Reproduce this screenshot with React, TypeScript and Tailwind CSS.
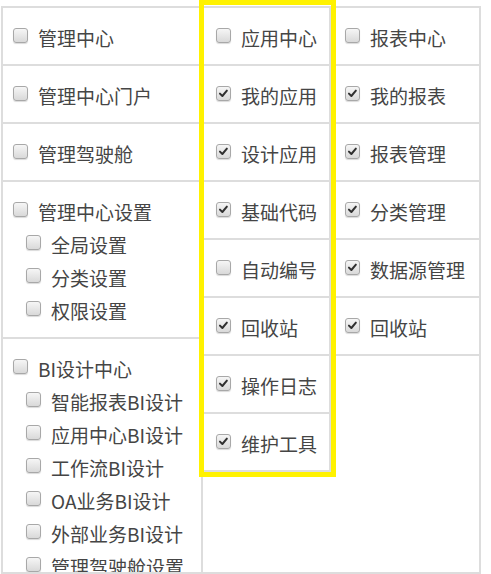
import React from 'react';

type Item = { label: string; checked?: boolean; children?: string[] };

const MANAGE: Item[] = [
  { label: '管理中心' },
  { label: '管理中心门户' },
  { label: '管理驾驶舱' },
  { label: '管理中心设置', children: ['全局设置', '分类设置', '权限设置'] },
  {
    label: 'BI设计中心',
    children: ['智能报表BI设计', '应用中心BI设计', '工作流BI设计', 'OA业务BI设计', '外部业务BI设计', '管理驾驶舱设置'],
  },
];

const APPS: Item[] = [
  { label: '应用中心' },
  { label: '我的应用', checked: true },
  { label: '设计应用', checked: true },
  { label: '基础代码', checked: true },
  { label: '自动编号' },
  { label: '回收站', checked: true },
  { label: '操作日志', checked: true },
  { label: '维护工具', checked: true },
];

const REPORTS: Item[] = [
  { label: '报表中心' },
  { label: '我的报表', checked: true },
  { label: '报表管理', checked: true },
  { label: '分类管理', checked: true },
  { label: '数据源管理', checked: true },
  { label: '回收站', checked: true },
];

const Box: React.FC<{ checked?: boolean }> = ({ checked }) => (
  <span className="relative mr-[10px] -mt-[3px] flex h-[15px] w-[15px] shrink-0 items-center justify-center rounded-[3px] border border-[#a8a8a8] bg-linear-to-b from-[#f6f6f6] to-[#d9d9d9] shadow-[0_1px_1px_rgba(0,0,0,0.15)]">
    {checked && (
      <svg viewBox="0 0 15 15" className="h-[13px] w-[13px]">
        <path d="M3.4 7.6 L6.2 10.4 L11.4 4.2" fill="none" stroke="#303030" strokeWidth="2.3" strokeLinecap="round" strokeLinejoin="round" />
      </svg>
    )}
  </span>
);

const Line: React.FC<{ label: string; checked?: boolean }> = ({ label, checked }) => (
  <div className="flex h-[33px] items-center whitespace-nowrap">
    <Box checked={checked} />
    <span className="translate-y-[2px]">{label}</span>
  </div>
);

const Cell: React.FC<{ item: Item; pad: string; last?: boolean; right?: boolean }> = ({ item, pad, last, right }) => (
  <div
    className={`border-t-2 border-[#dddddd] pt-[12px] pb-[11px] ${pad} ${last ? 'border-b-2' : ''} ${right ? 'border-r-2' : ''}`}
  >
    <Line label={item.label} checked={item.checked} />
    {item.children && (
      <div className="pl-[13px]">
        {item.children.map((c) => (
          <Line key={c} label={c} />
        ))}
      </div>
    )}
  </div>
);

export default function App() {
  return (
    <div
      className="relative h-[574px] w-[491px] overflow-hidden bg-white text-[19px] text-[#454545]"
      style={{ fontFamily: '"Noto Sans CJK SC", "Noto Sans", sans-serif' }}
    >
      <div className="ml-[1px] mt-[6px] flex h-[568px] w-[480px] overflow-hidden border-x-2 border-b-2 border-[#dddddd]">
        <div className="w-[200px] shrink-0 border-r-2 border-[#dddddd]">
          {MANAGE.map((it) => (
            <Cell key={it.label} item={it} pad="pl-[10px]" />
          ))}
        </div>
        <div className="w-[128px] shrink-0">
          {APPS.map((it, i) => (
            <Cell key={it.label} item={it} pad="pl-[13px]" right last={i === APPS.length - 1} />
          ))}
        </div>
        <div className="w-[148px] shrink-0">
          {REPORTS.map((it, i) => (
            <Cell key={it.label} item={it} pad="pl-[14px]" last={i === REPORTS.length - 1} />
          ))}
        </div>
      </div>

      {/* highlight box round the app column */}
      <div className="pointer-events-none absolute left-[199px] top-0 h-[477px] w-[137px] border-[5px] border-[#fff200]" />
    </div>
  );
}
